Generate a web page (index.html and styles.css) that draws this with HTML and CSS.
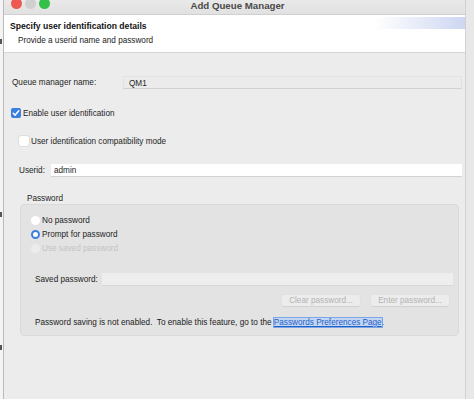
FILE: index.html
```html
<!DOCTYPE html>
<html>
<head>
<meta charset="utf-8">
<link rel="stylesheet" href="styles.css">
</head>
<body>
<div class="desk">
  <div class="edge-left">
    <span class="mark m1"></span>
    <span class="mark m2"></span>
    <span class="mark m3"></span>
  </div>
  <div class="window">
    <div class="titlebar">
      <div class="lights">
        <span class="light red"></span>
        <span class="light grey"></span>
        <span class="light green"></span>
      </div>
      <div class="title">Add Queue Manager</div>
    </div>
    <div class="header">
      <div class="h-title">Specify user identification details</div>
      <div class="h-sub">Provide a userid name and password</div>
    </div>
    <div class="body">
      <div class="row qm">
        <span class="lbl">Queue manager name:</span>
        <span class="field ro">QM1</span>
      </div>
      <div class="check c1">
        <span class="box checked">
          <svg width="10" height="10" viewBox="0 0 10 10"><path d="M2.3 5.2 L4.2 7.1 L7.8 2.8" fill="none" stroke="#fff" stroke-width="1.5" stroke-linecap="round" stroke-linejoin="round"/></svg>
        </span>
        <span>Enable user identification</span>
      </div>
      <div class="check c2">
        <span class="box"></span>
        <span>User identification compatibility mode</span>
      </div>
      <div class="row uid">
        <span class="lbl">Userid:</span>
        <span class="field wh">admin</span>
      </div>
      <div class="glabel">Password</div>
      <div class="group">
        <div class="radio"><span class="rb"></span><span>No password</span></div>
        <div class="radio"><span class="rb on"></span><span>Prompt for password</span></div>
        <div class="radio dis"><span class="rb"></span><span>Use saved password</span></div>
        <div class="row saved">
          <span class="lbl">Saved password:</span>
          <span class="field sv"></span>
        </div>
        <div class="buttons">
          <span class="btn">Clear password...</span>
          <span class="btn">Enter password...</span>
        </div>
        <div class="note">Password saving is not enabled.&nbsp; To enable this feature, go to the <span class="link">Passwords Preferences Page</span>.</div>
      </div>
    </div>
  </div>
  <div class="edge-right"></div>
</div>
</body>
</html>
```

FILE: styles.css
```css
html, body {
  margin: 0;
  padding: 0;
  width: 474px;
  height: 399px;
  overflow: hidden;
  font-family: "Liberation Sans", Arial, sans-serif;
  font-size: 8.2px;
  color: #1e1e1e;
  background: #ececec;
}
.desk {
  display: flex;
  height: 399px;
}
.edge-left {
  width: 3px;
  border-right: 1px solid #b9b9b9;
  background: #f4f4f4;
  position: relative;
  overflow: hidden;
}
.mark {
  position: absolute;
  left: 0;
  width: 2px;
  height: 5px;
  background: #555;
}
.m1 { top: 39px; }
.m2 { top: 212px; }
.m3 { top: 345px; }
.edge-right {
  width: 8px;
  background: #e8e8e8;
  border-left: 1px solid #d2d2d2;
}
.window {
  flex: 1;
  display: flex;
  flex-direction: column;
  background: #ececec;
}
.titlebar {
  height: 14px;
  background: linear-gradient(#e9e9e9, #e1e1e1);
  border-bottom: 1px solid #d0d0d0;
  position: relative;
  display: flex;
  justify-content: center;
}
.lights {
  position: absolute;
  left: 7px;
  top: -2px;
  display: flex;
  gap: 3px;
}
.light {
  width: 11px;
  height: 11px;
  border-radius: 50%;
}
.red { background: #ee5a52; }
.grey { background: #d0d0d0; }
.green { background: #33c148; }
.title {
  font-weight: bold;
  font-size: 9.7px;
  color: #4a4a4a;
  line-height: 11px;
  margin-top: 0;
  margin-left: 6px;
}
.header {
  height: 38px;
  background-image: linear-gradient(90deg, rgba(255,255,255,0) 0%, rgba(200,210,240,0.9) 100%);
  background-size: 90px 12px;
  background-position: right 0 top 2px;
  background-repeat: no-repeat;
  background-color: #fff;
  border-bottom: 1px solid #d6d6d6;
  padding: 6px 0 0 6px;
  box-sizing: border-box;
}
.h-title {
  font-weight: bold;
  font-size: 8.6px;
  color: #111;
}
.h-sub {
  margin-top: 5px;
  margin-left: 8px;
  color: #222;
}
.body {
  padding: 0 3px 0 7px;
}
.row {
  display: flex;
  align-items: center;
}
.qm {
  margin-top: 22px;
  height: 15px;
}
.qm .lbl {
  width: 111px;
  margin-left: 1px;
}
.field {
  flex: 1;
  height: 13px;
  line-height: 13px;
  box-sizing: border-box;
  padding-left: 5px;
}
.ro {
  background: #ebebeb;
  border: 1px solid #e2e2e2;
  border-bottom-color: #d0d0d0;
}
.wh {
  background: #fff;
  border-bottom: 1px solid #d2d2d2;
  padding-left: 3px;
}
.check {
  display: flex;
  align-items: center;
  gap: 2px;
}
.c1 { margin-top: 18px; }
.c2 { margin-top: 18px; margin-left: 8px; }
.box {
  width: 10px;
  height: 10px;
  border-radius: 2px;
  background: #fff;
  box-shadow: 0 0 0 0.5px #cfcfcf;
  display: flex;
}
.box.checked {
  background: #3a7fe0;
  box-shadow: none;
}
.uid {
  margin-top: 18px;
  margin-left: 8px;
  height: 13px;
}
.uid .lbl {
  width: 32px;
}
.glabel {
  margin-top: 17px;
  margin-left: 16px;
}
.group {
  margin: 1px 3px 0 9px;
  background: #e3e3e3;
  border: 1px solid #dadada;
  border-radius: 4px;
  padding: 8px 5px 5px 10px;
  height: 132px;
  box-sizing: border-box;
}
.radio {
  display: flex;
  align-items: center;
  gap: 2px;
  height: 14px;
}
.rb {
  width: 9px;
  height: 9px;
  border-radius: 50%;
  background: #fff;
  box-sizing: border-box;
}
.rb.on {
  border: 2.5px solid #3a7fe0;
}
.dis {
  color: #c4c4c4;
}
.dis .rb {
  background: #ececec;
}
.saved {
  margin-top: 18px;
  height: 13px;
  margin-left: 4px;
}
.saved .lbl {
  width: 67px;
}
.sv {
  background: #eeeeee;
  border-bottom: 1px solid #d8d8d8;
}
.buttons {
  display: flex;
  justify-content: flex-end;
  gap: 11px;
  margin-top: 9px;
  margin-right: 4px;
}
.btn {
  width: 78px;
  height: 11px;
  line-height: 11px;
  background: #ececec;
  border-radius: 2px;
  color: #b3b3b3;
  text-align: center;
  box-shadow: 0 0.5px 1px #d0d0d0;
}
.note {
  margin-top: 12px;
  margin-left: 4px;
  color: #1a1a1a;
}
.link {
  color: #1e5fc8;
  text-decoration: underline;
  background: #c3d6f2;
  outline: 1px solid #7ea6e6;
}
```
